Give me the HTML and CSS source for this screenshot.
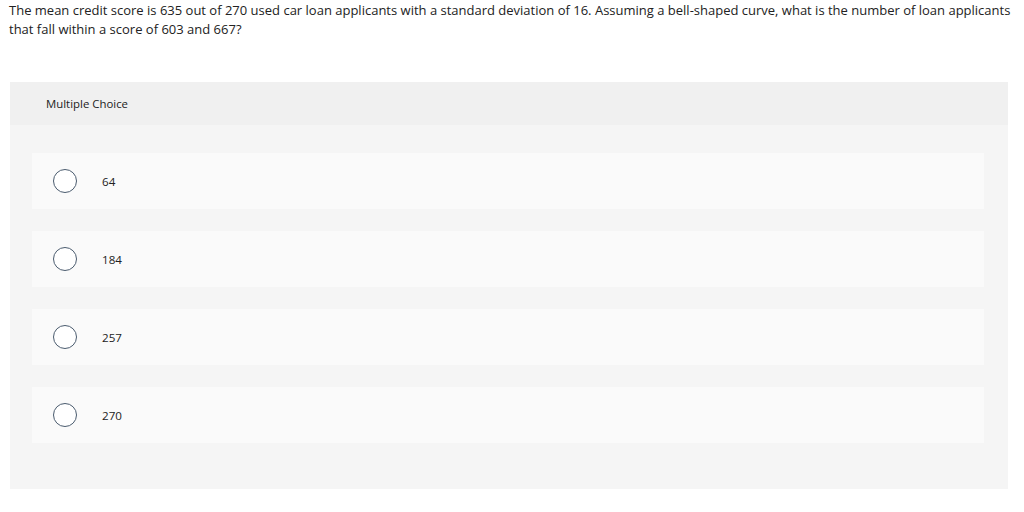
FILE: index.html
```html
<!DOCTYPE html>
<html>
<head>
<meta charset="utf-8">
<link rel="stylesheet" href="styles.css">
</head>
<body>
<p class="question">The mean credit score is 635 out of 270 used car loan applicants with a standard deviation of 16. Assuming a bell-shaped curve, what is the number of loan applicants that fall within a score of 603 and 667?</p>
<section class="panel">
  <div class="panel-head">Multiple Choice</div>
  <div class="panel-body">
    <label class="option"><span class="radio"></span><span class="label">64</span></label>
    <label class="option"><span class="radio"></span><span class="label">184</span></label>
    <label class="option"><span class="radio"></span><span class="label">257</span></label>
    <label class="option"><span class="radio"></span><span class="label">270</span></label>
  </div>
</section>
</body>
</html>
```
FILE: styles.css
```css
html, body { margin: 0; padding: 0; background: #fff; }
body {
  font-family: "Open Sans", "Lato", sans-serif;
  color: #222;
  padding: 1px 10px 0 9px;
}
.question {
  margin: 0;
  font-size: 13px;
  line-height: 19px;
  color: #222;
}
.panel {
  margin: 43px 6px 0 1px;
  background: #f5f5f5;
}
.panel-head {
  background: #f0f0f0;
  height: 43px;
  display: flex;
  align-items: center;
  padding-left: 36px;
  font-size: 11.4px;
  color: #222;
}
.panel-body {
  padding: 28px 24px 46px 22px;
  display: flex;
  flex-direction: column;
  gap: 22px;
}
.option {
  background: #fafafa;
  height: 56px;
  display: flex;
  align-items: center;
  padding-left: 21px;
}
.radio {
  width: 22px;
  height: 22px;
  border: 1.2px solid #4a5b6e;
  border-radius: 50%;
  background: #fff;
  flex: none;
}
.label {
  margin-left: 25px;
  font-size: 11.6px;
  color: #222;
}
```
